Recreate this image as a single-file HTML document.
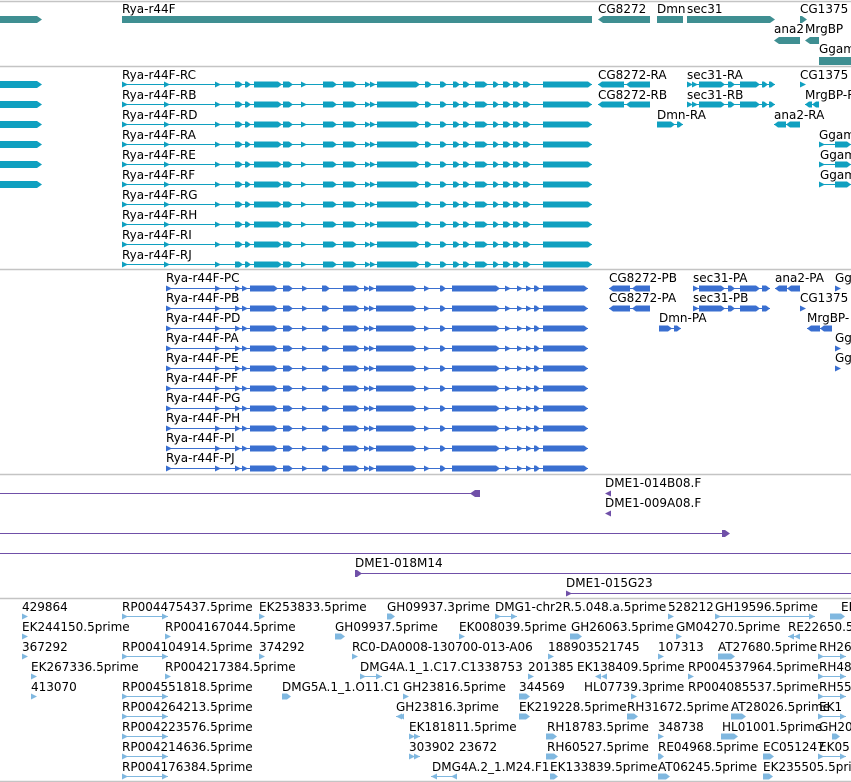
<!DOCTYPE html>
<html><head><meta charset="utf-8">
<style>
body{margin:0;width:851px;height:782px;overflow:hidden;background:#fff;position:relative;font-family:"DejaVu Sans","Liberation Sans",sans-serif;font-size:12px;color:#000}
.t{position:absolute;white-space:nowrap;line-height:14px}
svg{position:absolute;left:0;top:0}
</style></head><body>
<svg id="s" width="851" height="782" xmlns="http://www.w3.org/2000/svg"></svg>

<!-- track 1 -->
<div class="t" style="left:122px;top:2px">Rya-r44F</div>
<div class="t" style="left:598px;top:2px">CG8272</div>
<div class="t" style="left:657px;top:2px">Dmn</div>
<div class="t" style="left:687px;top:2px">sec31</div>
<div class="t" style="left:800px;top:2px">CG1375</div>
<div class="t" style="left:774px;top:22px">ana2</div>
<div class="t" style="left:805px;top:22px">MrgBP</div>
<div class="t" style="left:819px;top:42px">Ggam</div>

<!-- track 2 -->
<div class="t" style="left:122px;top:68px">Rya-r44F-RC</div>
<div class="t" style="left:122px;top:88px">Rya-r44F-RB</div>
<div class="t" style="left:122px;top:108px">Rya-r44F-RD</div>
<div class="t" style="left:122px;top:128px">Rya-r44F-RA</div>
<div class="t" style="left:122px;top:148px">Rya-r44F-RE</div>
<div class="t" style="left:122px;top:168px">Rya-r44F-RF</div>
<div class="t" style="left:122px;top:188px">Rya-r44F-RG</div>
<div class="t" style="left:122px;top:208px">Rya-r44F-RH</div>
<div class="t" style="left:122px;top:228px">Rya-r44F-RI</div>
<div class="t" style="left:122px;top:248px">Rya-r44F-RJ</div>
<div class="t" style="left:598px;top:68px">CG8272-RA</div>
<div class="t" style="left:687px;top:68px">sec31-RA</div>
<div class="t" style="left:800px;top:68px">CG1375</div>
<div class="t" style="left:598px;top:88px">CG8272-RB</div>
<div class="t" style="left:687px;top:88px">sec31-RB</div>
<div class="t" style="left:805px;top:88px">MrgBP-R</div>
<div class="t" style="left:657px;top:108px">Dmn-RA</div>
<div class="t" style="left:774px;top:108px">ana2-RA</div>
<div class="t" style="left:819px;top:128px">Ggam</div>
<div class="t" style="left:820px;top:148px">Ggam</div>
<div class="t" style="left:820px;top:168px">Ggam</div>

<!-- track 3 -->
<div class="t" style="left:166px;top:271px">Rya-r44F-PC</div>
<div class="t" style="left:166px;top:291px">Rya-r44F-PB</div>
<div class="t" style="left:166px;top:311px">Rya-r44F-PD</div>
<div class="t" style="left:166px;top:331px">Rya-r44F-PA</div>
<div class="t" style="left:166px;top:351px">Rya-r44F-PE</div>
<div class="t" style="left:166px;top:371px">Rya-r44F-PF</div>
<div class="t" style="left:166px;top:391px">Rya-r44F-PG</div>
<div class="t" style="left:166px;top:411px">Rya-r44F-PH</div>
<div class="t" style="left:166px;top:431px">Rya-r44F-PI</div>
<div class="t" style="left:166px;top:451px">Rya-r44F-PJ</div>
<div class="t" style="left:609px;top:271px">CG8272-PB</div>
<div class="t" style="left:693px;top:271px">sec31-PA</div>
<div class="t" style="left:775px;top:271px">ana2-PA</div>
<div class="t" style="left:835px;top:271px">Gg</div>
<div class="t" style="left:609px;top:291px">CG8272-PA</div>
<div class="t" style="left:693px;top:291px">sec31-PB</div>
<div class="t" style="left:800px;top:291px">CG1375</div>
<div class="t" style="left:659px;top:311px">Dmn-PA</div>
<div class="t" style="left:807px;top:311px">MrgBP-</div>
<div class="t" style="left:835px;top:331px">Gg</div>
<div class="t" style="left:835px;top:351px">Gg</div>

<!-- track 4 -->
<div class="t" style="left:605px;top:476px">DME1-014B08.F</div>
<div class="t" style="left:605px;top:496px">DME1-009A08.F</div>
<div class="t" style="left:355px;top:556px">DME1-018M14</div>
<div class="t" style="left:566px;top:576px">DME1-015G23</div>

<!-- track 5 -->
<div class="t" style="left:22px;top:600px">429864</div>
<div class="t" style="left:122px;top:600px">RP004475437.5prime</div>
<div class="t" style="left:259px;top:600px">EK253833.5prime</div>
<div class="t" style="left:387px;top:600px">GH09937.3prime</div>
<div class="t" style="left:495px;top:600px">DMG1-chr2R.5.048.a.5prime</div>
<div class="t" style="left:668px;top:600px">528212</div>
<div class="t" style="left:715px;top:600px">GH19596.5prime</div>
<div class="t" style="left:841px;top:600px">EK</div>

<div class="t" style="left:22px;top:620px">EK244150.5prime</div>
<div class="t" style="left:165px;top:620px">RP004167044.5prime</div>
<div class="t" style="left:335px;top:620px">GH09937.5prime</div>
<div class="t" style="left:459px;top:620px">EK008039.5prime</div>
<div class="t" style="left:571px;top:620px">GH26063.5prime</div>
<div class="t" style="left:676px;top:620px">GM04270.5prime</div>
<div class="t" style="left:788px;top:620px">RE22650.5</div>

<div class="t" style="left:22px;top:640px">367292</div>
<div class="t" style="left:122px;top:640px">RP004104914.5prime</div>
<div class="t" style="left:259px;top:640px">374292</div>
<div class="t" style="left:352px;top:640px">RC0-DA0008-130700-013-A06</div>
<div class="t" style="left:548px;top:640px">188903521745</div>
<div class="t" style="left:658px;top:640px">107313</div>
<div class="t" style="left:718px;top:640px">AT27680.5prime</div>
<div class="t" style="left:819px;top:640px">RH26</div>

<div class="t" style="left:31px;top:660px">EK267336.5prime</div>
<div class="t" style="left:165px;top:660px">RP004217384.5prime</div>
<div class="t" style="left:360px;top:660px">DMG4A.1_1.C17.C1338753</div>
<div class="t" style="left:528px;top:660px">201385</div>
<div class="t" style="left:577px;top:660px">EK138409.5prime</div>
<div class="t" style="left:688px;top:660px">RP004537964.5prime</div>
<div class="t" style="left:819px;top:660px">RH48</div>

<div class="t" style="left:31px;top:680px">413070</div>
<div class="t" style="left:122px;top:680px">RP004551818.5prime</div>
<div class="t" style="left:282px;top:680px">DMG5A.1_1.O11.C1</div>
<div class="t" style="left:403px;top:680px">GH23816.5prime</div>
<div class="t" style="left:519px;top:680px">344569</div>
<div class="t" style="left:584px;top:680px">HL07739.3prime</div>
<div class="t" style="left:688px;top:680px">RP004085537.5prime</div>
<div class="t" style="left:819px;top:680px">RH55</div>

<div class="t" style="left:122px;top:700px">RP004264213.5prime</div>
<div class="t" style="left:396px;top:700px">GH23816.3prime</div>
<div class="t" style="left:519px;top:700px">EK219228.5prime</div>
<div class="t" style="left:627px;top:700px">RH31672.5prime</div>
<div class="t" style="left:731px;top:700px">AT28026.5prime</div>
<div class="t" style="left:819px;top:700px">EK1</div>

<div class="t" style="left:122px;top:720px">RP004223576.5prime</div>
<div class="t" style="left:409px;top:720px">EK181811.5prime</div>
<div class="t" style="left:547px;top:720px">RH18783.5prime</div>
<div class="t" style="left:658px;top:720px">348738</div>
<div class="t" style="left:722px;top:720px">HL01001.5prime</div>
<div class="t" style="left:819px;top:720px">GH20</div>

<div class="t" style="left:122px;top:740px">RP004214636.5prime</div>
<div class="t" style="left:409px;top:740px">303902</div>
<div class="t" style="left:459px;top:740px">23672</div>
<div class="t" style="left:547px;top:740px">RH60527.5prime</div>
<div class="t" style="left:658px;top:740px">RE04968.5prime</div>
<div class="t" style="left:763px;top:740px">EC051247</div>
<div class="t" style="left:819px;top:740px">EK05</div>

<div class="t" style="left:122px;top:760px">RP004176384.5prime</div>
<div class="t" style="left:432px;top:760px">DMG4A.2_1.M24.F1</div>
<div class="t" style="left:550px;top:760px">EK133839.5prime</div>
<div class="t" style="left:658px;top:760px">AT06245.5prime</div>
<div class="t" style="left:763px;top:760px">EK235505.5prime</div>

<script>
var s=document.getElementById('s'),out='';
function ln(x1,y1,x2,y2,c,w){out+='<line x1="'+x1+'" y1="'+y1+'" x2="'+x2+'" y2="'+y2+'" stroke="'+c+'" stroke-width="'+(w||1)+'"/>';}
function poly(p,c){out+='<polygon points="'+p+'" fill="'+c+'"/>';}
function ex(a,b,y,c,h,dir){h=h||3;dir=dir||1;
 if(b-a<6){ if(dir>0)poly(a+','+(y-h)+' '+(a+6)+','+y+' '+a+','+(y+h),c); else poly((a+6)+','+(y-h)+' '+a+','+y+' '+(a+6)+','+(y+h),c); return;}
 if(dir>0)poly(a+','+(y-h)+' '+(b-4)+','+(y-h)+' '+b+','+y+' '+(b-4)+','+(y+h)+' '+a+','+(y+h),c);
 else poly((a+4)+','+(y-h)+' '+b+','+(y-h)+' '+b+','+(y+h)+' '+(a+4)+','+(y+h)+' '+a+','+y,c);}
function gene(y,exs,c,dir,h){var a=exs[0][0],b=exs[exs.length-1][1];ln(a,y+0.5,b,y+0.5,c);exs.forEach(function(e){ex(e[0],e[1],y+0.5,c,h,dir)});}
function bar(a,b,y1,y2,c,dir){var m=(y1+y2)/2;if(dir>0)poly(a+','+y1+' '+(b-5)+','+y1+' '+b+','+m+' '+(b-5)+','+y2+' '+a+','+y2,c);else if(dir<0)poly((a+5)+','+y1+' '+b+','+y1+' '+b+','+y2+' '+(a+5)+','+y2+' '+a+','+m,c);else out+='<rect x="'+a+'" y="'+y1+'" width="'+(b-a)+'" height="'+(y2-y1)+'" fill="'+c+'"/>';}
[1,66,269,474,598,781].forEach(function(y){ln(0,y+0.5,851,y+0.5,'#c4c4c4',1.5)});
var T='#3f8f92';
bar(0,42,16,23,T,1);bar(122,592,16,23,T,0);bar(598,650,16,23,T,-1);bar(657,683,16,23,T,0);bar(687,775,16,23,T,1);bar(800,807,16,23,T,1);
bar(774,800,37,44,T,-1);bar(805,819,37,44,T,-1);bar(819,851,57,65,T,0);
var C='#10a0c0';
var p2=[[122,122],[164,164],[215,215],[235,243],[245,251],[254,282],[283,293],[301,301],[323,337],[343,357],[365,368],[370,373],[377,420],[425,432],[440,447],[453,460],[463,470],[475,488],[493,499],[503,511],[513,521],[523,531],[543,592]];
for(var i=0;i<10;i++){var y=84+20*i;gene(y,p2,C,1);}
for(var i=0;i<6;i++){bar(0,42,81+20*i,88+20*i,C,1);}
gene(84,[[598,624],[626,648],[644,650]],C,-1);gene(104,[[598,624],[626,648],[644,650]],C,-1);
var sp=[[687,690],[692,697],[699,725],[728,735],[740,760],[762,768],[769,775]];
gene(84,sp,C,1);gene(104,sp,C,1);
ex(800,800,84.5,C);gene(104,[[805,812],[812,819]],C,-1);
gene(124,[[657,675],[677,683]],C,1);gene(124,[[774,786],[786,800]],C,-1);
for(var i=0;i<3;i++){var y=144+20*i;gene(y,[[819,819],[835,851]],C,1);}
var B='#3a6fd0';
var p3=[[166,166],[215,215],[235,239],[242,247],[250,278],[283,293],[302,302],[322,330],[343,360],[364,367],[369,372],[376,417],[424,424],[440,446],[452,500],[505,509],[517,522],[526,530],[534,540],[543,588]];
for(var i=0;i<10;i++){gene(288+20*i,p3,B,1);}
gene(288,[[609,630],[632,650]],B,-1);gene(308,[[609,630],[632,650]],B,-1);
gene(288,[[693,697],[699,725],[728,735],[740,760],[762,770]],B,1);gene(308,[[693,697],[699,725],[728,735],[740,760],[762,770]],B,1);
gene(288,[[775,787],[787,800]],B,-1);ex(835,835,288.5,B);ex(800,800,308.5,B);
gene(328,[[659,672],[674,681]],B,1);gene(328,[[807,820],[820,832]],B,-1);ex(835,835,348.5,B);ex(835,835,368.5,B);
var P='#7050a8';
ln(0,493.5,478,493.5,P);bar(470,480,490,497,P,-1);ex(605,605,493.5,P,3,-1);ex(605,605,513.5,P,3,-1);
ln(0,533.5,728,533.5,P);bar(722,730,530,537,P,1);
ln(0,553.5,851,553.5,P);
ln(355,573.5,851,573.5,P);bar(355,362,570,577,P,1);
ln(566,593.5,851,593.5,P);ex(566,566,593.5,P);
var L='#80b8e0';
var e5=[
[616,[[22,22],[122,168,1],[259,259],[387,395],[495,517,1],[668,672],[715,815,1],[830,845]]],
[636,[[22,22],[165,165],[335,345],[459,459],[570,582],[676,680],[788,800,-1]]],
[656,[[22,26],[122,168,1],[259,262],[352,352],[548,552],[658,658],[718,735],[818,846,1]]],
[676,[[31,31],[165,165],[360,382,1],[528,533],[601,601,-1],[688,692],[818,846,1]]],
[696,[[31,31],[122,168,1],[282,291],[403,403],[519,530],[631,636],[818,846,1]]],
[716,[[122,168,1],[396,404,-1],[519,530],[627,638],[731,746],[818,846,1]]],
[736,[[122,168,1],[409,420,1],[546,557],[658,663],[721,738],[832,840]]],
[756,[[122,168,1],[409,420,1],[546,558],[658,664],[763,774],[818,846,1]]],
[776,[[122,168,1],[431,457,-1],[550,558],[658,670],[763,773]]]];
e5.forEach(function(r){var y=r[0]+0.5;r[1].forEach(function(e){if(e[2]){ln(e[0],y,e[1],y,L);ex(e[1]-6,e[1]-6,y,L,3,e[2]);ex(e[0],e[0],y,L,3,e[2]);}else ex(e[0],e[1],y,L,3,1);});});
s.innerHTML=out;
</script>
</body></html>
